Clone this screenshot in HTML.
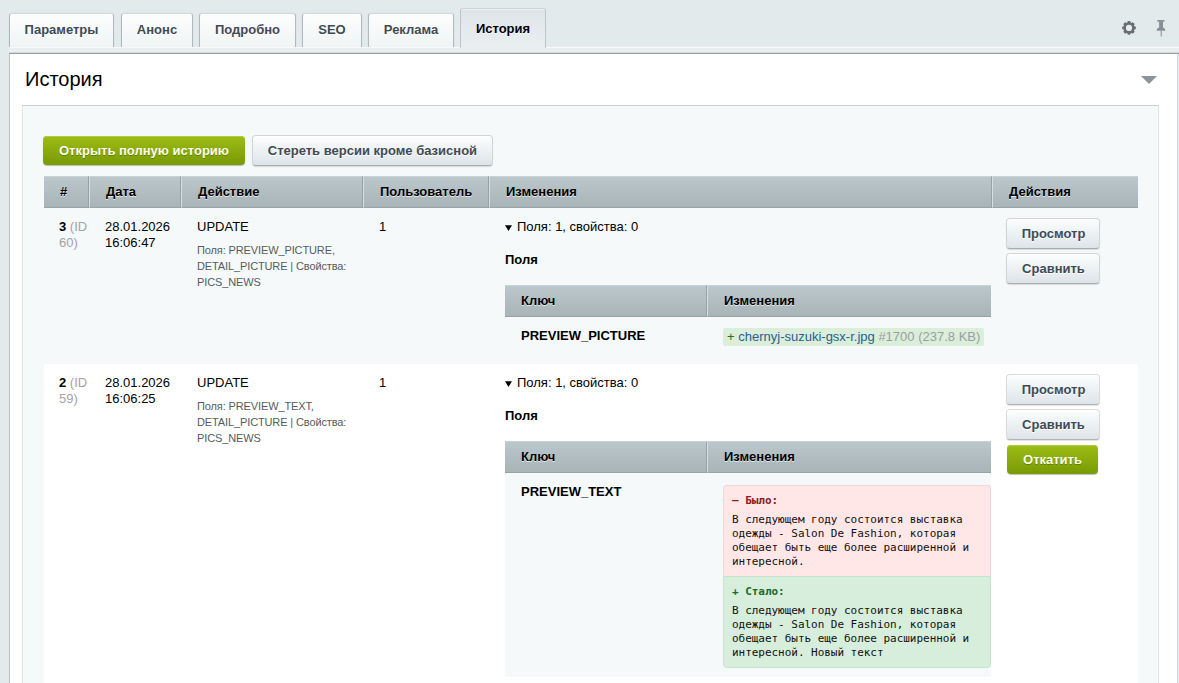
<!DOCTYPE html>
<html lang="ru">
<head>
<meta charset="utf-8">
<title>История</title>
<style>
*{box-sizing:border-box}
html,body{margin:0;padding:0}
body{width:1179px;height:683px;overflow:hidden;position:relative;background:#e3eaec;
  font-family:"Liberation Sans",Arial,Helvetica,sans-serif;font-size:13px;line-height:16px;color:#000}

/* ---------- tabs ---------- */
.tab{position:absolute;top:13px;height:34px;padding:0;text-align:center;line-height:31px;font-size:13px;font-weight:bold;
  color:#3f4b54;text-shadow:0 1px 0 #fff;white-space:nowrap;border:1px solid #b0b9bd;border-top-color:#d2d9db;border-bottom:none;
  border-radius:3px 3px 0 0;background:linear-gradient(#fcfdfd,#f1f4f5);box-shadow:0 0 2px rgba(0,0,0,.07),inset 0 1px 0 #fff}
.tab.active{top:8px;height:40px;line-height:39px;color:#000;border-color:#bcc5c9;border-top-color:#cdd4d7;
  background:linear-gradient(#dde4e7,#e6ecee 70%,#e9eef0);box-shadow:inset 0 1px 0 #eef2f3;text-shadow:0 1px 0 #f3f6f7}
.band{position:absolute;left:9px;right:0;top:47px;height:7px;background:#e9eef0;border-top:1px solid #f8fafa;
  border-bottom:1px solid #96a1a6;box-shadow:inset 0 -1px 0 #d3dadd}
.icon{position:absolute}

/* ---------- content ---------- */
.content{position:absolute;left:9px;top:54px;width:1169px;height:640px;background:#fff;
  border-left:1px solid #bcc4c7;border-right:1px solid #d3d9db}
.title{position:absolute;left:15px;top:9px;font-size:20px;line-height:30px;color:#000;transform:scaleY(1.055);transform-origin:0 12px}
.tri{position:absolute;left:1131px;top:22px;width:0;height:0;border-left:8px solid transparent;
  border-right:8px solid transparent;border-top:8px solid #8d9397}
.panel{position:absolute;left:12px;top:51px;width:1137px;height:600px;background:#f5f9f9;
  border:1px solid #dfe6e8;border-top-color:#c8ced1;border-bottom:none}

/* ---------- buttons ---------- */
.btn{display:inline-block;height:31px;line-height:29px;margin:-1px 0;padding:0 15px;font-size:13px;font-weight:bold;
  color:#3f4b54;text-shadow:0 1px 0 #fff;border-radius:4px;white-space:nowrap;vertical-align:top;
  background:linear-gradient(#fdfefe,#eef2f4 45%,#dde4e8) padding-box;border:1px solid rgba(0,0,0,.14);border-bottom-color:rgba(0,0,0,.30);
  box-shadow:0 1px 1px rgba(0,0,0,.12),inset 0 1px 0 #fff}
.btn.green{height:29px;margin:0;padding:0 16px;line-height:30px;border:none;color:#fdfdea;text-shadow:0 1px 0 #5f8205;
  background:linear-gradient(#9fbd17,#8bab0d 50%,#789a04);
  box-shadow:0 1px 1px rgba(0,0,0,.25),inset 0 1px 0 #b3cc3f}
.toolbar{position:absolute;left:20px;top:30px;white-space:nowrap;font-size:0}
.toolbar .btn+.btn{margin-left:7px;width:241px;padding:0;text-align:center}

/* ---------- main table ---------- */
table{border-collapse:separate;border-spacing:0}
.list{position:absolute;left:21px;top:70px;width:1094px;table-layout:fixed}
.list>thead>tr>th, .sub>thead>tr>th{height:32px;padding:0 16px 1px 16px;text-align:left;font-size:13px;font-weight:bold;color:#000;
  text-shadow:0 1px 0 rgba(255,255,255,.7);background:linear-gradient(#bac7cc,#a9b4b7);
  border-top:1px solid #c9d3d6;border-bottom:1px solid #98a3a6;border-left:1px solid #d6dee1;border-right:1px solid #97a2a5;
  white-space:nowrap;vertical-align:middle}
.list>thead>tr>th:first-child,.sub>thead>tr>th:first-child{border-left:none;padding-left:16px}
.list>thead>tr>th:last-child,.sub>thead>tr>th:last-child{border-right:none}
.list>tbody>tr>td{vertical-align:top;padding:11px 16px 9px 16px}
.list>tbody>tr.r2>td{background:#fff}
.gray{color:#a3a3a3}
.small{font-size:11px;line-height:16px;color:#555c60;margin-top:7px;letter-spacing:-0.12px}
.sum{margin:0}
.sum .arr{display:inline-block;width:7px;height:6px;margin:0 5px 0 0;vertical-align:baseline}
.h{font-weight:bold;margin:17px 0 17px 0}
.sub{width:486px;table-layout:fixed}
.sub>tbody>tr>td{vertical-align:top;padding:11px 16px 9px 16px;background:#f5f9f9}
.sub b{font-weight:bold}
.tag{display:inline-block;height:18px;line-height:18px;padding:0 4px 0 4px;background:#daeeda;border-radius:2px;white-space:nowrap}
.tag .p{color:#2a6b2a}.tag .f{color:#285f95}.tag .g{color:#999fa1}
.acts .btn{display:block;width:94px;margin:-1px 0 5px 0;text-align:center;padding:0 0 0 1px}
.acts .btn.green{width:91px;padding:0;margin:1px 0 0 1px}

/* ---------- diff ---------- */
.diff{width:268px;letter-spacing:-0.035px;border-radius:4px;font-family:"DejaVu Sans Mono","Liberation Mono",monospace;font-size:11px;line-height:14px;color:#111;margin-top:1px}
.diff .was{background:#ffe7e7;border:1px solid #f3d3d3;border-bottom:none;border-radius:4px 4px 0 0;padding:8px 8px 7px 8px}
.diff .now{background:#d7eedc;border:1px solid #c6e3cc;border-radius:0 0 4px 4px;padding:8px 8px 7px 8px}
.diff .t{font-weight:bold;margin-bottom:5px}
.diff .was .t{color:#8a1f1f}
.diff .now .t{color:#1f6a2c}
</style>
</head>
<body>

<div class="tab" style="left:9px;width:105px">Параметры</div>
<div class="tab" style="left:121px;width:72px">Анонс</div>
<div class="tab" style="left:199px;width:97px">Подробно</div>
<div class="tab" style="left:302px;width:60px">SEO</div>
<div class="tab" style="left:368px;width:86px">Реклама</div>
<div class="band"></div>
<div class="tab active" style="left:460px;width:86px">История</div>

<svg class="icon" style="left:1121px;top:20px" width="16" height="16" viewBox="0 0 16 16">
  <g fill="#666e72">
    <circle cx="8" cy="7.9" r="5.5"/>
    <g id="teeth"><rect x="6.3" y="1.1" width="3.4" height="3.4" rx="1.1"/><rect x="6.3" y="11.3" width="3.4" height="3.4" rx="1.1"/></g>
    <use href="#teeth" transform="rotate(45 8 7.9)"/><use href="#teeth" transform="rotate(90 8 7.9)"/><use href="#teeth" transform="rotate(135 8 7.9)"/>
  </g>
  <circle cx="8" cy="7.9" r="3.1" fill="#e6ecee"/>
</svg>
<svg class="icon" style="left:1154px;top:19px" width="14" height="19" viewBox="0 0 14 19">
  <g fill="#889095">
    <rect x="3.3" y="1" width="7.2" height="1.7" rx="0.4"/>
    <rect x="5.1" y="2.4" width="3.9" height="6.6"/>
    <path d="M2.5 11.7 Q2.7 9.2 5.1 8.6 L9 8.6 Q11.3 9.2 11.4 11.7 Z"/>
    <rect x="6.7" y="11.5" width="1" height="5.9"/>
  </g>
</svg>

<div class="content">
  <div class="title">История</div>
  <div class="tri"></div>
  <div class="panel">
    <div class="toolbar"><span class="btn green">Открыть полную историю</span><span class="btn">Стереть версии кроме базисной</span></div>

    <table class="list">
      <colgroup><col style="width:45px"><col style="width:92px"><col style="width:182px"><col style="width:126px"><col style="width:503px"><col style="width:146px"></colgroup>
      <thead><tr><th>#</th><th>Дата</th><th>Действие</th><th>Пользователь</th><th>Изменения</th><th>Действия</th></tr></thead>
      <tbody>
        <tr class="r1">
          <td style="padding-right:0;padding-left:15px"><b>3</b> <span class="gray">(ID 60)</span></td>
          <td>28.01.2026 16:06:47</td>
          <td style="padding-right:8px">UPDATE<div class="small">Поля: PREVIEW_PICTURE, DETAIL_PICTURE | Свойства: PICS_NEWS</div></td>
          <td>1</td>
          <td style="padding-right:0">
            <div class="sum"><svg class="arr" viewBox="0 0 7 6"><polygon points="0,0.2 7,0.2 3.5,6" fill="#000"/></svg>Поля: 1, свойства: 0</div>
            <div class="h">Поля</div>
            <table class="sub">
              <colgroup><col style="width:202px"><col></colgroup>
              <thead><tr><th>Ключ</th><th>Изменения</th></tr></thead>
              <tbody><tr>
                <td><b>PREVIEW_PICTURE</b></td>
                <td><span class="tag"><span class="p">+</span> <span class="f">chernyj-suzuki-gsx-r.jpg</span> <span class="g">#1700 (237.8 KB)</span></span></td>
              </tr></tbody>
            </table>
          </td>
          <td class="acts" style="padding-left:14px"><span class="btn">Просмотр</span><span class="btn">Сравнить</span></td>
        </tr>
        <tr class="r2">
          <td style="padding-right:0;padding-left:15px"><b>2</b> <span class="gray">(ID 59)</span></td>
          <td>28.01.2026 16:06:25</td>
          <td style="padding-right:8px">UPDATE<div class="small">Поля: PREVIEW_TEXT, DETAIL_PICTURE | Свойства: PICS_NEWS</div></td>
          <td>1</td>
          <td style="padding-right:0">
            <div class="sum"><svg class="arr" viewBox="0 0 7 6"><polygon points="0,0.2 7,0.2 3.5,6" fill="#000"/></svg>Поля: 1, свойства: 0</div>
            <div class="h">Поля</div>
            <table class="sub">
              <colgroup><col style="width:202px"><col></colgroup>
              <thead><tr><th>Ключ</th><th>Изменения</th></tr></thead>
              <tbody><tr>
                <td><b>PREVIEW_TEXT</b></td>
                <td>
                  <div class="diff">
                    <div class="was"><div class="t">— Было:</div>В следующем году состоится выставка одежды - Salon De Fashion, которая обещает быть еще более расширенной и интересной.</div>
                    <div class="now"><div class="t">+ Стало:</div>В следующем году состоится выставка одежды - Salon De Fashion, которая обещает быть еще более расширенной и интересной. Новый текст</div>
                  </div>
                </td>
              </tr></tbody>
            </table>
          </td>
          <td class="acts" style="padding-left:14px"><span class="btn">Просмотр</span><span class="btn">Сравнить</span><span class="btn green">Откатить</span></td>
        </tr>
      </tbody>
    </table>
  </div>
</div>

</body>
</html>
